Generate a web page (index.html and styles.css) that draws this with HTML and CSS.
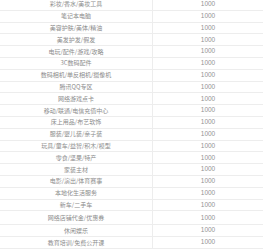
FILE: index.html
```html
<!DOCTYPE HTML>
<html lang="zh-CN">
<head>
    <meta charset="UTF-8">
    <meta name="viewport" content="width=device-width, initial-scale=1.0">
    <title>类目列表</title>
    <link rel="stylesheet" href="styles.css">
</head>
<body>
    <div class="list">
        <div class="row"><span class="name">彩妆/香水/美妆工具</span><span class="num">1000</span></div>
        <div class="row"><span class="name">笔记本电脑</span><span class="num">1000</span></div>
        <div class="row"><span class="name">美容护肤/美体/精油</span><span class="num">1000</span></div>
        <div class="row"><span class="name">美发护发/假发</span><span class="num">1000</span></div>
        <div class="row"><span class="name">电玩/配件/游戏/攻略</span><span class="num">1000</span></div>
        <div class="row"><span class="name">3C数码配件</span><span class="num">1000</span></div>
        <div class="row"><span class="name">数码相机/单反相机/摄像机</span><span class="num">1000</span></div>
        <div class="row"><span class="name">腾讯QQ专区</span><span class="num">1000</span></div>
        <div class="row"><span class="name">网络游戏点卡</span><span class="num">1000</span></div>
        <div class="row"><span class="name">移动/联通/电信充值中心</span><span class="num">1000</span></div>
        <div class="row"><span class="name">床上用品/布艺软饰</span><span class="num">1000</span></div>
        <div class="row"><span class="name">服装/婴儿装/亲子装</span><span class="num">1000</span></div>
        <div class="row"><span class="name">玩具/童车/益智/积木/模型</span><span class="num">1000</span></div>
        <div class="row"><span class="name">零食/坚果/特产</span><span class="num">1000</span></div>
        <div class="row"><span class="name">家装主材</span><span class="num">1000</span></div>
        <div class="row"><span class="name">电影/演出/体育赛事</span><span class="num">1000</span></div>
        <div class="row"><span class="name">本地化生活服务</span><span class="num">1000</span></div>
        <div class="row"><span class="name">新车/二手车</span><span class="num">1000</span></div>
        <div class="row tall"><span class="name">网络店铺代金/优惠券</span><span class="num">1000</span></div>
        <div class="row"><span class="name">休闲娱乐</span><span class="num">1000</span></div>
        <div class="row"><span class="name">教育培训/免费公开课</span><span class="num">1000</span></div>
    </div>
</body>
</html>
```

FILE: styles.css
```css
body {
    margin: 0;
    background-color: #ffffff;
    overflow: hidden;
}

.list {
    margin-top: -1px;
    font-family: "Noto Sans CJK SC", "Liberation Sans", sans-serif;
    color: #8c8c8c;
}

.row {
    display: grid;
    grid-template-columns: 153px 1fr;
    box-sizing: border-box;
    height: 11.8px;
    border-bottom: 1px solid #ededed;
}

.row.tall {
    height: 14px;
}

.name,
.num {
    display: flex;
    align-items: center;
    justify-content: center;
    font-size: 6px;
    line-height: 1;
}

.name {
    border-right: 1px solid #ededed;
}

.num {
    font-family: "Liberation Sans", sans-serif;
    font-size: 6.5px;
    color: #939393;
}
```
